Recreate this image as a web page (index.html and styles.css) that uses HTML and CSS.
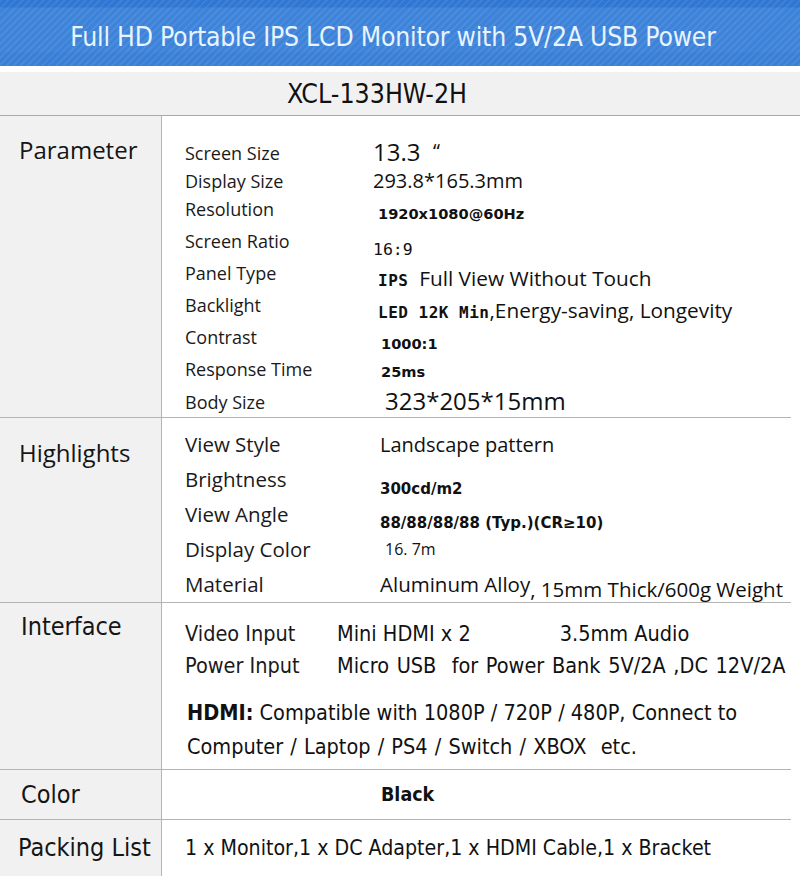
FILE: index.html
```html
<!DOCTYPE html>
<html>
<head>
<meta charset="utf-8">
<link rel="stylesheet" href="styles.css">
</head>
<body>
<div class="page">
  <header class="banner"><h1 class="banner-title">Full HD Portable IPS LCD Monitor with 5V/2A USB Power</h1></header>
  <div class="model">XCL-133HW-2H</div>

  <section class="row row-param">
    <div class="label">Parameter</div>
    <div class="cell specs">
      <div class="line h28"><span class="key">Screen Size</span><span class="val v-big">13.3 &nbsp;<span class="quote">“</span></span></div>
      <div class="line h28"><span class="key">Display Size</span><span class="val v-md">293.8*165.3mm</span></div>
      <div class="line h32"><span class="key">Resolution</span><span class="val v-bold dn4 ind">1920x1080@60Hz</span></div>
      <div class="line h32"><span class="key">Screen Ratio</span><span class="val v-ratio dn8">16:9</span></div>
      <div class="line h32"><span class="key">Panel Type</span><span class="val v-lg dn5 ind"><b class="mono">IPS</b>&nbsp; Full View Without Touch</span></div>
      <div class="line h32"><span class="key">Backlight</span><span class="val v-lg dn5 ind"><b class="mono">LED 12K Min</b>,Energy-saving, Longevity</span></div>
      <div class="line h32"><span class="key">Contrast</span><span class="val v-bold dn6 ind2">1000:1</span></div>
      <div class="line h32"><span class="key">Response Time</span><span class="val v-bold dn2 ind2">25ms</span></div>
      <div class="line h30"><span class="key">Body Size</span><span class="val v-big ind3">323*205*15mm</span></div>
    </div>
  </section>

  <section class="row row-high">
    <div class="label">Highlights</div>
    <div class="cell specs">
      <div class="line h35"><span class="key k20">View Style</span><span class="val v-md">Landscape pattern</span></div>
      <div class="line h35"><span class="key k20">Brightness</span><span class="val v-bold hdn10">300cd/m2</span></div>
      <div class="line h35"><span class="key k20">View Angle</span><span class="val v-bold hdn9">88/88/88/88 (Typ.)(CR≥10)</span></div>
      <div class="line h35"><span class="key k20">Display Color</span><span class="val v-sm ind">16. 7m</span></div>
      <div class="line h35"><span class="key k20">Material</span><span class="val v-mat">Aluminum Alloy<span class="drop">, 15mm Thick/600g Weight</span></span></div>
    </div>
  </section>

  <section class="row row-iface">
    <div class="label label-narrow">Interface</div>
    <div class="cell iface">
      <div class="iline"><span class="ikey">Video Input</span><span class="ival">Mini HDMI x 2<span class="audio">3.5mm Audio</span></span></div>
      <div class="iline"><span class="ikey">Power Input</span><span class="ival power">Micro USB&nbsp; for Power Bank 5V/2A ,DC 12V/2A</span></div>
      <p class="hdmi"><b>HDMI:</b> Compatible with 1080P / 720P / 480P, Connect to<br><span class="comp">Computer / Laptop / PS4 / Switch / XBOX&nbsp; etc.</span></p>
    </div>
  </section>

  <section class="row row-color">
    <div class="label label-narrow label-color">Color</div>
    <div class="cell color-cell"><b>Black</b></div>
  </section>

  <section class="row row-pack">
    <div class="label label-narrow label-pack">Packing List</div>
    <div class="cell pack-cell">1 x Monitor,1 x DC Adapter,1 x HDMI Cable,1 x Bracket</div>
  </section>
</div>
</body>
</html>
```
FILE: styles.css
```css
* { box-sizing: border-box; margin: 0; padding: 0; }
html, body { background: #ffffff; }
body { width: 800px; height: 880px; overflow: hidden; font-family: "Open Sans", "Noto Sans", sans-serif; color: #111; }

.page { width: 800px; }

.banner {
  height: 66px;
  background:
    repeating-linear-gradient(135deg, rgba(255,255,255,0.07) 0 2px, rgba(255,255,255,0) 2px 5px),
    linear-gradient(#2f77d2 0, #2f77d2 7px, #3d83da 8px, #3d83da 52px, #3a7fd6 53px, #3a7fd6 66px);
  display: flex;
  align-items: center;
  justify-content: center;
  padding-top: 7px;
  padding-right: 14px;
}
.banner-title {
  font-family: "DejaVu Sans Condensed", "DejaVu Sans", sans-serif;
  font-stretch: condensed;
  font-weight: normal;
  font-size: 26.3px;
  color: #e8f4ff;
  letter-spacing: -0.2px;
}

.model {
  margin-top: 6px;
  height: 44px;
  background: #f2f1f2;
  border-bottom: 1px solid #a9a9a9;
  display: flex;
  align-items: center;
  justify-content: center;
  font-family: "DejaVu Sans Condensed", "DejaVu Sans", sans-serif;
  font-stretch: condensed;
  font-size: 26.5px;
  color: #111;
  padding-right: 46px;
}

.row {
  width: 791px;
  display: grid;
  grid-template-columns: 162px 629px;
  border-bottom: 1px solid #b4b4b4;
  overflow: hidden;
}
.label {
  background: #f2f1f2;
  border-right: 1px solid #b4b4b4;
  font-size: 24px;
  padding-left: 19px;
  color: #151515;
}
.cell { background: #fff; }

.row-param { height: 302px; }
.row-param .label { padding-top: 17px; }
.row-high { height: 185px; }
.row-high .label { padding-top: 18px; }
.row-iface { height: 167px; }
.row-color { height: 50px; }
.row-pack { height: 56px; border-bottom: none; }

.specs { padding-left: 23px; }
.row-param .specs { padding-top: 23px; }
.row-high .specs { padding-top: 9px; }

.line { display: flex; align-items: flex-start; }
.h28 { height: 28px; }
.h30 { height: 30px; }
.h32 { height: 32px; }
.h35 { height: 35px; }
.line .key { width: 188px; font-size: 18px; line-height: 28px; color: #1a1a1a; }
.h32 .key { line-height: 32px; margin-top: -2px; }
.h30 .key { line-height: 30px; }
.h35 .key.k20 { font-size: 20.5px; line-height: 35px; width: 195px; }

.val { color: #111; white-space: nowrap; }
.v-big { font-size: 24px; line-height: 28px; margin-top: -2px; }
.h30 .v-big { line-height: 30px; margin-top: -1px; }
.quote { font-size: 20px; vertical-align: 3px; }
.v-md { font-size: 20px; line-height: 28px; }
.h35 .v-md { line-height: 35px; }
.v-lg { font-size: 20.8px; line-height: 32px; }
.v-ratio { font-family: "DejaVu Sans Mono", monospace; font-size: 16.5px; line-height: 32px; }
.v-sm { font-size: 16px; line-height: 35px; }
.v-bold { font-size: 14.6px; font-weight: bold; line-height: 32px; font-family: "DejaVu Sans", sans-serif; }
.h35 .v-bold { line-height: 35px; font-size: 15px; }
.mono { font-family: "DejaVu Sans Mono", monospace; font-weight: bold; font-size: 16px; letter-spacing: 0.5px; }
.v-mat { font-size: 20.5px; line-height: 35px; }

.dn2 { padding-top: 1px; }
.dn4 { padding-top: 3px; }
.dn5 { padding-top: 3px; }
.dn6 { padding-top: 5px; }
.dn8 { padding-top: 7px; }
.hdn10 { padding-top: 10px; }
.hdn9 { padding-top: 9px; }
.ind { padding-left: 5px; }
.ind2 { padding-left: 8px; }
.ind3 { padding-left: 12px; }
.drop { display: inline-block; vertical-align: -5px; }

.label-narrow {
  font-family: "DejaVu Sans Condensed", "DejaVu Sans", sans-serif;
  font-stretch: condensed;
  font-size: 25px;
}
.row-iface .label { padding-top: 9px; padding-left: 21px; }

.iface {
  padding-left: 23px;
  padding-top: 14px;
  font-family: "DejaVu Sans Condensed", "DejaVu Sans", sans-serif;
  font-stretch: condensed;
}
.iline { display: flex; height: 32px; align-items: center; }
.ikey { width: 152px; font-size: 21.5px; color: #1a1a1a; }
.ival { font-size: 21.5px; color: #111; }
.power { word-spacing: 1.5px; }
.audio { margin-left: 89px; }
.hdmi { margin-top: 15px; padding-left: 2px; font-size: 21.5px; line-height: 34px; color: #111; }
.comp { word-spacing: 1px; }

.label-color { display: flex; align-items: center; padding-left: 21px; }
.color-cell { display: flex; align-items: center; padding-left: 219px; font-family: "DejaVu Sans Condensed", sans-serif; font-stretch: condensed; font-size: 19.5px; }
.label-pack { display: flex; align-items: center; padding-left: 18px; padding-bottom: 2px; }
.pack-cell { display: flex; align-items: center; padding-left: 23px; padding-bottom: 2px; font-family: "DejaVu Sans Condensed", sans-serif; font-stretch: condensed; font-size: 21.2px; }
```
